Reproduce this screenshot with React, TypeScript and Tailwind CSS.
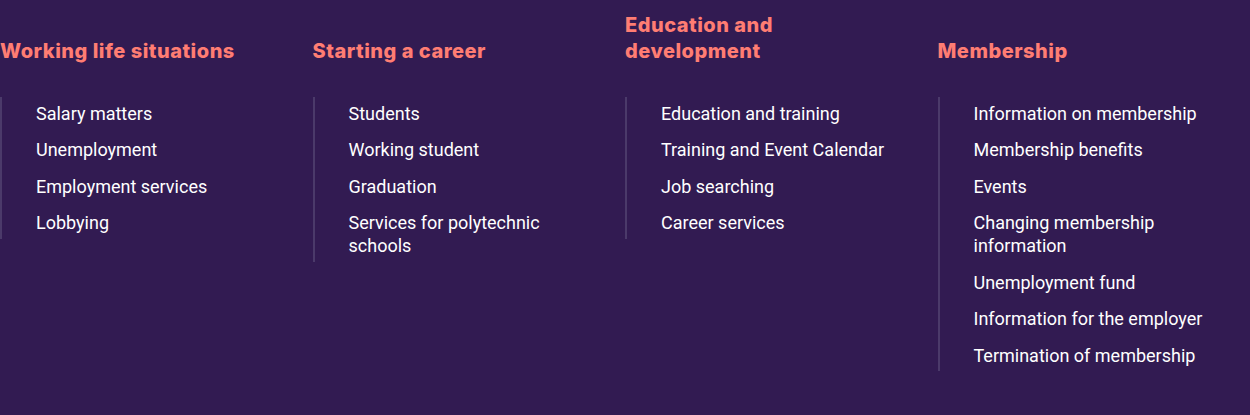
import React from "react";

interface FooterColumn {
  title: string;
  links: string[];
}

const columns: FooterColumn[] = [
  {
    title: "Working life situations",
    links: ["Salary matters", "Unemployment", "Employment services", "Lobbying"],
  },
  {
    title: "Starting a career",
    links: ["Students", "Working student", "Graduation", "Services for polytechnic schools"],
  },
  {
    title: "Education and development",
    links: ["Education and training", "Training and Event Calendar", "Job searching", "Career services"],
  },
  {
    title: "Membership",
    links: [
      "Information on membership",
      "Membership benefits",
      "Events",
      "Changing membership information",
      "Unemployment fund",
      "Information for the employer",
      "Termination of membership",
    ],
  },
];

const App: React.FC = () => {
  return (
    <div className="w-[1250px] h-[415px] bg-[#321b52] pt-[12px] font-[Roboto]">
      <div className="grid grid-cols-4">
        {columns.map((col) => (
          <div key={col.title} className="pr-10">
            <div className="h-[52px] flex items-end">
              <h3 className="text-[20px] leading-[26px] font-extrabold tracking-[0.5px] text-[#ff7d73] font-[Inter] max-w-[270px]">
                {col.title}
              </h3>
            </div>
            <ul className="mt-[33px] border-l-2 border-[#4b3a6a] pl-[34px] py-[4.5px] flex flex-col gap-[13.5px]">
              {col.links.map((link) => (
                <li key={link} className="text-[18px] leading-[23px] text-white font-[Roboto]">
                  {link}
                </li>
              ))}
            </ul>
          </div>
        ))}
      </div>
    </div>
  );
};

export default App;
